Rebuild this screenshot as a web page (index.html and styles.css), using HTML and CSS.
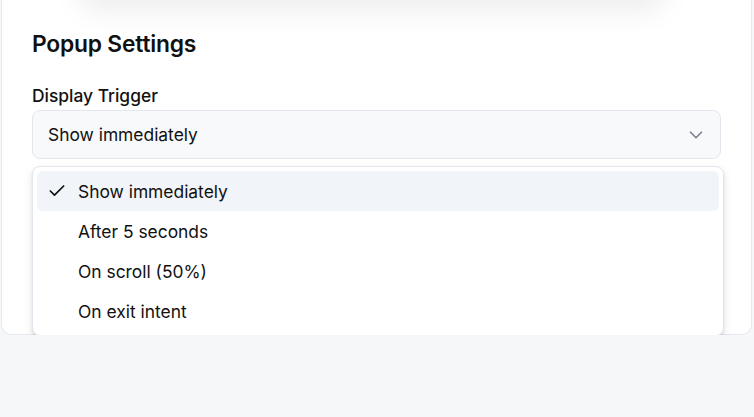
FILE: index.html
```html
<!DOCTYPE html>
<html>
<head>
<meta charset="utf-8">
<link rel="stylesheet" href="styles.css">
</head>
<body>
<div class="page">
  <div class="top-shadow"></div>
  <section class="card">
    <h2 class="title">Popup Settings</h2>
    <div class="field">
      <label class="label">Display Trigger</label>
      <div class="select-wrap">
        <button class="trigger" type="button">
          <span>Show immediately</span>
          <svg class="chev" width="22" height="22" viewBox="0 0 24 24" fill="none" stroke="currentColor" stroke-width="1.8" stroke-linecap="round" stroke-linejoin="round"><path d="m6 9 6 6 6-6"/></svg>
        </button>
        <ul class="menu">
          <li class="item active">
            <span class="check"><svg width="20" height="20" viewBox="0 0 24 24" fill="none" stroke="currentColor" stroke-width="2" stroke-linecap="round" stroke-linejoin="round"><path d="M20 6 9 17l-5-5"/></svg></span>
            <span>Show immediately</span>
          </li>
          <li class="item"><span class="check"></span><span>After 5 seconds</span></li>
          <li class="item"><span class="check"></span><span>On scroll (50%)</span></li>
          <li class="item"><span class="check"></span><span>On exit intent</span></li>
        </ul>
      </div>
    </div>
  </section>
</div>
</body>
</html>
```

FILE: styles.css
```css
* { box-sizing: border-box; }
html, body {
  margin: 0;
  padding: 0;
  background: #f6f7f9;
  font-family: Inter, "Noto Sans", sans-serif;
  color: #111111;
  overflow: hidden;
}
.page {
  position: relative;
  padding: 0 2px 0 1px;
}
.top-shadow {
  position: absolute;
  left: 80px;
  right: 90px;
  top: -60px;
  height: 60px;
  border-radius: 16px;
  background: #fff;
  box-shadow: 0 10px 30px rgba(0, 0, 0, 0.08);
  z-index: 2;
}
.card {
  background: #fff;
  border: 1px solid #e6e8ee;
  border-top: none;
  border-radius: 0 0 10px 10px;
  padding: 29px 30px 175px 30px;
}
.title {
  margin: 0 0 26px;
  font-size: 22.8px;
  line-height: 30px;
  font-weight: 600;
  letter-spacing: -0.2px;
}
.label {
  display: block;
  font-size: 17.4px;
  line-height: 22px;
  font-weight: 500;
  margin-bottom: 3px;
}
.select-wrap {
  position: relative;
}
.trigger {
  width: 100%;
  height: 49px;
  display: flex;
  align-items: center;
  justify-content: space-between;
  padding: 0 13px 0 15px;
  background: #f8f9fb;
  border: 1px solid #e3e6ec;
  border-radius: 8px;
  font: inherit;
  font-size: 17.4px;
  color: #111111;
}
.chev { color: #7a7f8a; }
.menu {
  position: absolute;
  top: 56px;
  left: 0;
  right: -3px;
  margin: 0;
  padding: 4px;
  list-style: none;
  background: #fff;
  border: 1px solid #e3e6ec;
  border-radius: 8px;
  box-shadow: 0 4px 10px rgba(15, 23, 42, 0.1), 0 2px 3px rgba(15, 23, 42, 0.08);
}
.item {
  height: 40px;
  display: flex;
  align-items: center;
  padding: 0 10px;
  font-size: 17.4px;
  border-radius: 6px;
}
.item.active { background: #f1f4f8; }
.check {
  width: 20px;
  height: 20px;
  margin-right: 11px;
  display: flex;
  color: #111111;
}
```
